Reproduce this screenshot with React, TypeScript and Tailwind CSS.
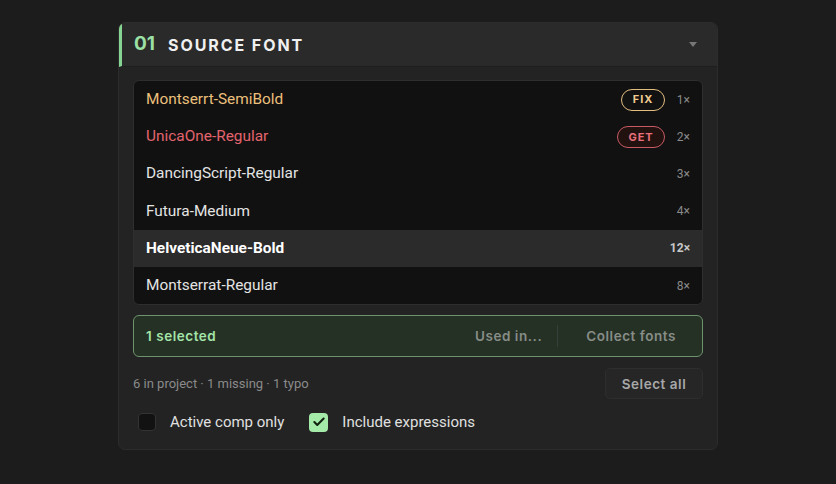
import { Check } from "lucide-react";

type Font = {
  name: string;
  count: string;
  tone?: "fix" | "get";
  selected?: boolean;
};

const fonts: Font[] = [
  { name: "Montserrt-SemiBold", count: "1×", tone: "fix" },
  { name: "UnicaOne-Regular", count: "2×", tone: "get" },
  { name: "DancingScript-Regular", count: "3×" },
  { name: "Futura-Medium", count: "4×" },
  { name: "HelveticaNeue-Bold", count: "12×", selected: true },
  { name: "Montserrat-Regular", count: "8×" },
];

const geo = { fontFamily: "Inter, 'Noto Sans', sans-serif" };
const rob = { fontFamily: "Roboto, 'Liberation Sans', sans-serif" };

function Row({ f }: { f: Font }) {
  let nameColor = "text-[#e4e4e4]";
  if (f.tone === "fix") nameColor = "text-[#ecc07c]";
  if (f.tone === "get") nameColor = "text-[#e3646e]";
  return (
    <div
      className={`flex h-[37.2px] items-center pl-[12px] pr-[12px] ${
        f.selected ? "bg-[#2b2b2b]" : ""
      }`}
    >
      <span
        className={`flex-1 text-[15.4px] ${nameColor} ${f.selected ? "font-bold text-white" : ""}`}
        style={rob}
      >
        {f.name}
      </span>
      {f.tone === "fix" && (
        <span
          className="mr-[11px] flex h-[22px] w-[44px] items-center justify-center rounded-full border-[1.5px] border-[#e2bd80] text-[11px] font-bold tracking-[0.08em] text-[#f0cb90]"
          style={geo}
        >
          FIX
        </span>
      )}
      {f.tone === "get" && (
        <span
          className="mr-[11px] flex h-[22px] w-[48px] items-center justify-center rounded-full border-[1.5px] border-[#c85a66] bg-[#21110f] text-[11px] font-bold tracking-[0.08em] text-[#e9707c]"
          style={geo}
        >
          GET
        </span>
      )}
      <span
        className={`min-w-[14px] text-right text-[12px] ${
          f.selected ? "font-bold text-[#c8c8c8]" : "text-[#8a8a8a]"
        }`}
        style={rob}
      >
        {f.count}
      </span>
    </div>
  );
}

export default function App() {
  return (
    <div className="flex min-h-screen justify-center bg-[#1c1c1c] pt-[22px]">
      <div className="h-[428px] w-[600px] overflow-hidden rounded-[7px] border border-[#2c2c2c] bg-[#232323]">
        <div className="flex h-[44px] items-center border-b border-[#1e1e1e] border-l-[3px] border-l-[#86d494] bg-[#2a2a2a] pl-[12px] pr-[20px]">
          <span className="text-[19px] font-bold text-[#9be0a4]" style={geo}>
            01
          </span>
          <span
            className="ml-[13px] flex-1 text-[16px] font-bold tracking-[0.12em] text-[#f0f0f0]"
            style={geo}
          >
            SOURCE FONT
          </span>
          <svg width="8" height="5" viewBox="0 0 8 5">
            <path d="M0 0h8L4 5z" fill="#777" />
          </svg>
        </div>

        <div className="px-[14px] pt-[13px]">
          <div className="overflow-hidden rounded-[6px] border border-[#2e2e2e] bg-[#111111]">
            {fonts.map((f) => (
              <Row key={f.name} f={f} />
            ))}
          </div>

          <div
            className="mt-[10px] flex h-[42px] items-center rounded-[6px] border border-[#6d946e] bg-[#263126] pl-[12px] pr-[26px] text-[13.5px] font-semibold tracking-[0.04em]"
            style={geo}
          >
            <span className="flex-1 text-[#a3e4a8]">1 selected</span>
            <span className="text-[#878d87]">Used in...</span>
            <span className="ml-[15px] mr-[28px] h-[22px] w-px bg-[#34403a]" />
            <span className="text-[#878d87]">Collect fonts</span>
          </div>

          <div className="mt-[11px] flex items-center">
            <span className="flex-1 text-[13px] text-[#8a8a8a]" style={rob}>
              6 in project · 1 missing · 1 typo
            </span>
            <button
              className="flex h-[31px] w-[98px] items-center justify-center rounded-[5px] border border-[#2e2e2e] bg-[#262626] text-[13.5px] font-semibold tracking-[0.04em] text-[#a8a8a8]"
              style={geo}
            >
              Select all
            </button>
          </div>

          <div className="mt-[12px] flex items-center pl-[5px] text-[15px] text-[#e0e0e0]" style={rob}>
            <span className="h-[18px] w-[18px] rounded-[4px] border border-[#333] bg-[#121212]" />
            <span className="ml-[14px]">Active comp only</span>
            <span className="ml-[25px] flex h-[19px] w-[19px] items-center justify-center rounded-[4px] bg-[#a4eaa9]">
              <Check size={14} strokeWidth={3.5} color="#10210f" />
            </span>
            <span className="ml-[14px]">Include expressions</span>
          </div>
        </div>
      </div>
    </div>
  );
}
